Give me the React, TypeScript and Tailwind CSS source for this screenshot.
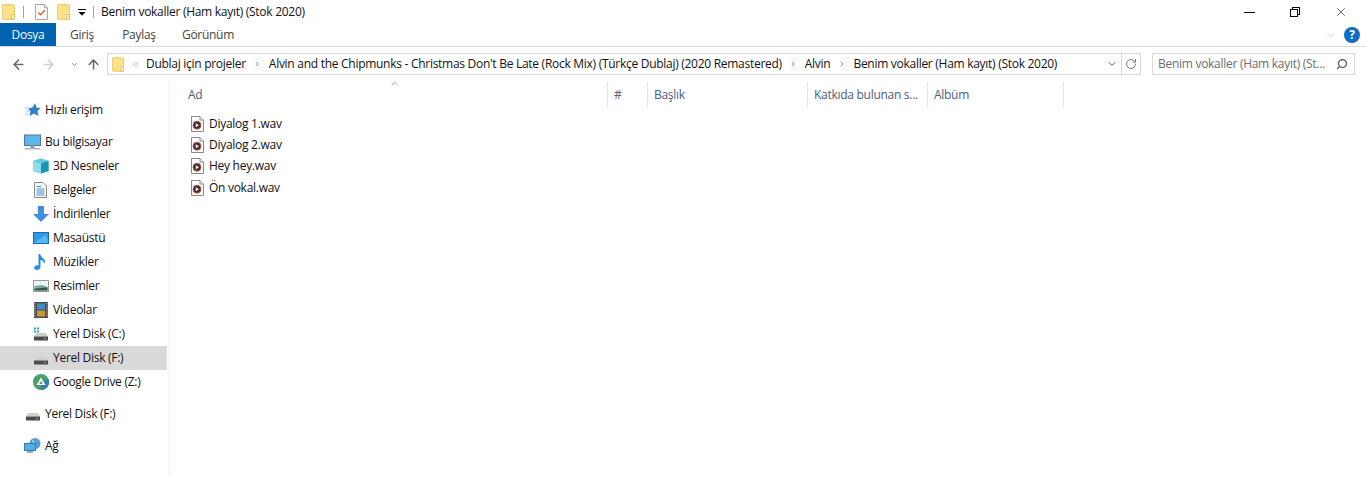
import React from 'react';
import { ArrowLeft, ArrowRight, ArrowUp, ChevronDown, ChevronRight, ChevronUp, ChevronsLeft, RotateCw, Search, X } from 'lucide-react';

const FolderIcon = ({ className = '' }: { className?: string }) => (
  <svg viewBox="0 0 14 17" className={className}>
    <path d="M0.5 1.5 Q0.5 0.5 1.5 0.5 H11 L13.5 1.5 V16.5 H1.5 Q0.5 16.5 0.5 15.5 Z" fill="#fde08a" stroke="#e8c766" />
    <rect x="10.5" y="11" width="3" height="5.5" fill="#f8f0c8" stroke="#d9b650" strokeWidth="0.7" />
  </svg>
);

const ChecklistIcon = () => (
  <svg viewBox="0 0 14 17" className="w-[13px] h-[16px]">
    <path d="M0.5 0.5 H10 L13.5 4 V16.5 H0.5 Z" fill="#fff" stroke="#9a9a9a" />
    <path d="M10 0.5 V4 H13.5" fill="#eee" stroke="#9a9a9a" />
    <path d="M3.5 9 L6 11.5 L10.5 6.5" fill="none" stroke="#e2622a" strokeWidth="1.6" />
  </svg>
);

const QuickAccessArrow = () => (
  <svg viewBox="0 0 8 7" className="w-[8px] h-[7px]">
    <path d="M0 0.5 H8" stroke="#000" />
    <path d="M0.5 3 H7.5 L4 6.8 Z" fill="#000" />
  </svg>
);

const WavIcon = () => (
  <svg viewBox="0 0 13 16" className="w-[13px] h-[16px] shrink-0">
    <path d="M0.5 0.5 H9 L12.5 4 V15.5 H0.5 Z" fill="#fff" stroke="#8a8a8a" />
    <path d="M9 0.5 V4 H12.5" fill="#f0f0f0" stroke="#8a8a8a" />
    <circle cx="6" cy="9.2" r="4" fill="#3a3038" />
    <circle cx="6" cy="9.2" r="4" fill="none" stroke="#c0563c" strokeWidth="1" />
    <path d="M4.8 7.2 L8 9.2 L4.8 11.2 Z" fill="#fff" />
  </svg>
);

const StarIcon = () => (
  <svg viewBox="0 0 16 16" className="w-[16px] h-[16px]">
    <path d="M10 1 L11.5 5.5 L15.5 6 L12.5 9 L13.5 14 L9 11.5 L4.5 14 L5.5 9 L3 6.5 L7.5 5.5 Z" fill="#2f7fcf" />
    <path d="M0 6 H4 M1 9 H5 M0 12 H3" stroke="#9ac6ee" />
  </svg>
);

const MonitorIcon = () => (
  <svg viewBox="0 0 17 16" className="w-[17px] h-[16px]">
    <rect x="0.5" y="1" width="16" height="10.5" fill="#5cb6ec" stroke="#4a7a9a" />
    <rect x="6.5" y="11.5" width="4" height="2.5" fill="#8a9aa6" />
    <rect x="1" y="14" width="15" height="1.5" fill="#a8b6c0" />
  </svg>
);

const CubeIcon = () => (
  <svg viewBox="0 0 16 16" className="w-[16px] h-[16px]">
    <path d="M8 0.5 L15.5 3 V13 L8 15.5 L0.5 13 V3 Z" fill="#39b9d6" />
    <path d="M0.5 3 L8 5.5 V15.5 L0.5 13 Z" fill="#8fdcea" />
    <path d="M8 0.5 L15.5 3 L8 5.5 L0.5 3 Z" fill="#5fcbe2" />
    <path d="M8 5.5 L15.5 3 V13 L8 15.5 Z" fill="#1b93b2" />
  </svg>
);

const DocIcon = () => (
  <svg viewBox="0 0 13 16" className="w-[13px] h-[16px]">
    <path d="M0.5 0.5 H9 L12.5 4 V15.5 H0.5 Z" fill="#fafafa" stroke="#8a8a8a" />
    <path d="M2.5 4.5 H7 M2.5 7 H10.5 M2.5 9 H10.5 M2.5 11 H10.5 M2.5 13 H10.5" stroke="#4a8ac6" />
  </svg>
);

const DownIcon = () => (
  <svg viewBox="0 0 16 16" className="w-[16px] h-[16px]">
    <path d="M5 0 H11 V8 H16 L8 16 L0 8 H5 Z" fill="#3f8fe0" />
  </svg>
);

const DesktopIcon = () => (
  <svg viewBox="0 0 16 12" className="w-[16px] h-[12px]">
    <rect x="0.5" y="0.5" width="15" height="11" fill="#2e9bea" stroke="#1a6cb0" />
    <path d="M1 11 L13 3 L15 11 Z" fill="#58b6f2" />
  </svg>
);

const NoteIcon = () => (
  <svg viewBox="0 0 13 16" className="w-[13px] h-[16px]">
    <path d="M4.5 0 H6.2 C6.5 3.5 12.5 5 11 10 C10.3 8 8.5 6.5 6.5 6 V13 C6.5 15 4.8 16 2.9 16 C0.8 16 0.2 15 0.2 13.8 C0.2 12 2 11 4.5 11.4 Z" fill="#2f8be0" />
  </svg>
);

const PictureIcon = () => (
  <svg viewBox="0 0 16 12" className="w-[16px] h-[12px]">
    <rect x="0.5" y="0.5" width="15" height="11" fill="#eef5fa" stroke="#9a9a9a" />
    <path d="M1.5 6 L9 5 L14.5 7 V10.5 H1.5 Z" fill="#7fa89a" />
    <path d="M1.5 8.5 L14.5 7.5 V10.5 H1.5 Z" fill="#2d5a4a" />
  </svg>
);

const FilmIcon = () => (
  <svg viewBox="0 0 14 16" className="w-[14px] h-[16px]">
    <rect x="0" y="0" width="14" height="16" fill="#4a4a4a" />
    <path d="M1 1 V15 M13 1 V15" stroke="#ddd" strokeDasharray="1.2 1.2" />
    <rect x="3" y="1.5" width="8" height="6" fill="#3f8fc4" />
    <rect x="3" y="8.5" width="8" height="6" fill="#c89a3a" />
  </svg>
);

const DriveIcon = ({ win = false }: { win?: boolean }) => (
  <svg viewBox="0 0 16 14" className="w-[16px] h-[14px]">
    {win && <path d="M1 0.5 H3 V2.5 H1 Z M4 0.5 H6 V2.5 H4 Z M1 3.5 H3 V5.5 H1 Z M4 3.5 H6 V5.5 H4 Z" fill="#1fa6e8" />}
    <path d="M3 6 H13 L15 9.5 H1 Z" fill="#cfcfcf" />
    <rect x="1" y="9.5" width="14" height="4" fill="#4c4c4c" />
    <rect x="11" y="11" width="2" height="1" fill="#4ed04e" />
  </svg>
);

const GDriveIcon = () => (
  <svg viewBox="0 0 16 16" className="w-[16px] h-[16px]">
    <circle cx="8" cy="8" r="8" fill="#4aa06a" />
    <path d="M8 8 L15.5 5 A8 8 0 0 1 8 16 Z" fill="#2f7fb0" />
    <path d="M8 3.5 L12.5 11 H3.5 Z" fill="#fff" />
    <path d="M8 7 L9.8 10 H6.2 Z" fill="#4aa06a" />
  </svg>
);

const NetworkIcon = () => (
  <svg viewBox="0 0 17 16" className="w-[17px] h-[16px]">
    <circle cx="11" cy="5.5" r="5.5" fill="#5a9ed0" />
    <path d="M8 2 Q11 4 9 9" stroke="#cfe6f5" fill="none" />
    <rect x="0.5" y="5.5" width="11" height="7" fill="#4fb0ea" stroke="#3a7aa6" />
    <rect x="3" y="13" width="6" height="2" fill="#9aa8b2" />
  </svg>
);

type NavItem = { label: string; icon: React.ReactNode; indent?: boolean; selected?: boolean; gap?: string };

const navItems: NavItem[] = [
  { label: 'Hızlı erişim', icon: <StarIcon />, gap: 'mt-[4px]' },
  { label: 'Bu bilgisayar', icon: <MonitorIcon />, gap: 'mt-[8px]' },
  { label: '3D Nesneler', icon: <CubeIcon />, indent: true },
  { label: 'Belgeler', icon: <DocIcon />, indent: true },
  { label: 'İndirilenler', icon: <DownIcon />, indent: true },
  { label: 'Masaüstü', icon: <DesktopIcon />, indent: true },
  { label: 'Müzikler', icon: <NoteIcon />, indent: true },
  { label: 'Resimler', icon: <PictureIcon />, indent: true },
  { label: 'Videolar', icon: <FilmIcon />, indent: true },
  { label: 'Yerel Disk (C:)', icon: <DriveIcon win />, indent: true },
  { label: 'Yerel Disk (F:)', icon: <DriveIcon />, indent: true, selected: true },
  { label: 'Google Drive (Z:)', icon: <GDriveIcon />, indent: true },
  { label: 'Yerel Disk (F:)', icon: <DriveIcon />, gap: 'mt-[8px]' },
  { label: 'Ağ', icon: <NetworkIcon />, gap: 'mt-[8px]' },
];

const files = ['Diyalog 1.wav', 'Diyalog 2.wav', 'Hey hey.wav', 'Ön vokal.wav'];

const crumbs = [
  'Dublaj için projeler',
  "Alvin and the Chipmunks - Christmas Don't Be Late (Rock Mix) (Türkçe Dublaj) (2020 Remastered)",
  'Alvin',
  'Benim vokaller (Ham kayıt) (Stok 2020)',
];

const columns = [
  { label: '#', width: 'w-[40px]' },
  { label: 'Başlık', width: 'w-[160px]' },
  { label: 'Katkıda bulunan s...', width: 'w-[120px]' },
  { label: 'Albüm', width: 'w-[136px]' },
];

export default function App() {
  return (
    <div className="w-[1366px] h-[477px] overflow-hidden bg-white flex flex-col text-[12px] text-[#111] font-['Open_Sans','Noto_Sans',sans-serif] tracking-[-0.28px]">
      {/* Title bar */}
      <div className="h-[23px] flex items-center shrink-0 pt-[1px]">
        <FolderIcon className="w-[13px] h-[16px] ml-[2px]" />
        <div className="w-px h-[12px] bg-[#a0a0a0] ml-[8px]" />
        <div className="ml-[11px] flex"><ChecklistIcon /></div>
        <FolderIcon className="w-[13px] h-[16px] ml-[9px]" />
        <div className="ml-[8px] flex"><QuickAccessArrow /></div>
        <div className="w-px h-[12px] bg-[#a0a0a0] ml-[7px]" />
        <span className="ml-[7px]">Benim vokaller (Ham kayıt) (Stok 2020)</span>
        <div className="ml-auto mr-[2px] flex items-center">
          <div className="w-[46px] flex justify-center"><div className="w-[11px] h-px bg-black" /></div>
          <div className="w-[46px] flex justify-center relative">
            <div className="w-[8px] h-[8px] border border-black mt-[2px] -ml-[2px] bg-white relative z-10" />
            <div className="w-[8px] h-[8px] border border-black absolute top-0 left-[20px]" />
          </div>
          <div className="w-[46px] flex justify-center"><X className="w-[14px] h-[14px] text-black" strokeWidth={1} /></div>
        </div>
      </div>

      {/* Ribbon tabs */}
      <div className="h-[24px] flex items-stretch border-b border-[#dadada] shrink-0 pt-[1px]">
        <div className="w-[56px] bg-[#0063b1] text-white flex items-center justify-center -mt-[1px]">Dosya</div>
        <div className="w-[52px] flex items-center justify-center text-[#444]">Giriş</div>
        <div className="w-[62px] flex items-center justify-center text-[#444]">Paylaş</div>
        <div className="w-[76px] flex items-center justify-center text-[#444]">Görünüm</div>
        <div className="ml-auto flex items-center">
          <ChevronDown className="w-[12px] h-[12px] text-[#a8a8a8] mr-[7px]" strokeWidth={1.2} />
          <div className="w-[16px] h-[16px] rounded-full bg-[#0f6cc4] text-white text-[12px] font-bold flex items-center justify-center mr-[6px]">?</div>
        </div>
      </div>

      {/* Address row */}
      <div className="h-[33px] flex items-center shrink-0 pt-[1px]">
        <ArrowLeft className="w-[15px] h-[15px] ml-[11px] text-[#6a6a6a]" strokeWidth={2.4} />
        <ArrowRight className="w-[15px] h-[15px] ml-[15px] text-[#d0d0d0]" strokeWidth={2.4} />
        <ChevronDown className="w-[9px] h-[9px] ml-[14px] text-[#8a8a8a]" strokeWidth={2.5} />
        <ArrowUp className="w-[15px] h-[15px] ml-[7px] text-[#6a6a6a]" strokeWidth={2.4} />
        <div className="ml-[6px] w-[1034px] h-[22px] border border-[#d9d9d9] flex items-center">
          <FolderIcon className="w-[12px] h-[15px] ml-[4px]" />
          <ChevronsLeft className="w-[9px] h-[9px] ml-[7px] text-[#777]" strokeWidth={1.5} />
          {crumbs.map((c, i) => (
            <React.Fragment key={c}>
              {i > 0 && <ChevronRight className="w-[8px] h-[8px] mx-[7.5px] text-[#888]" strokeWidth={2.5} />}
              <span className={`whitespace-nowrap ${i === 0 ? 'ml-[6px]' : ''}`}>{c}</span>
            </React.Fragment>
          ))}
          <ChevronDown className="ml-auto w-[12px] h-[12px] mr-[3px] text-[#555]" strokeWidth={2} />
          <div className="w-px h-full bg-[#d9d9d9]" />
          <RotateCw className="w-[12px] h-[12px] mx-[3px] text-[#777]" strokeWidth={2} />
        </div>
        <div className="ml-[11px] w-[203px] h-[22px] border border-[#d9d9d9] flex items-center pl-[5px] text-[#6d6d6d]">
          <span className="whitespace-nowrap">Benim vokaller (Ham kayıt) (St...</span>
          <Search className="ml-auto mr-[6px] w-[12px] h-[12px] text-[#555] -scale-x-100" strokeWidth={2.5} />
        </div>
      </div>

      {/* Body */}
      <div className="flex flex-1 min-h-0">
        {/* Nav pane */}
        <div className="w-[170px] shrink-0 border-r border-[#f0f0f0] pt-[14px]">
          {navItems.map((item, i) => (
            <div
              key={i}
              className={`h-[24px] flex items-center mr-[2px] ${item.gap ?? ''} ${item.selected ? 'bg-[#d9d9d9]' : ''} ${item.indent ? 'pl-[32px]' : 'pl-[24px]'}`}
            >
              <div className="w-[17px] flex justify-center shrink-0">{item.icon}</div>
              <span className="whitespace-nowrap ml-[4px]">{item.label}</span>
            </div>
          ))}
        </div>

        {/* File list */}
        <div className="flex-1 relative">
          <ChevronUp className="absolute left-[219px] -top-[2px] w-[11px] h-[11px] text-[#777]" strokeWidth={1.5} />
          <div className="h-[26px] mt-[2px] flex text-[#4c607a]">
            <div className="w-[438px] pl-[18px] border-r border-[#e5e5e5] flex items-center">Ad</div>
            {columns.map(col => (
              <div key={col.label} className={`${col.width} pl-[6px] border-r border-[#e5e5e5] flex items-center whitespace-nowrap`}>
                {col.label}
              </div>
            ))}
          </div>
          <div className="mt-[5px] pl-[21px]">
            {files.map(f => (
              <div key={f} className="h-[21.33px] flex items-center gap-[5px]">
                <WavIcon />
                <span>{f}</span>
              </div>
            ))}
          </div>
        </div>
      </div>
    </div>
  );
}
